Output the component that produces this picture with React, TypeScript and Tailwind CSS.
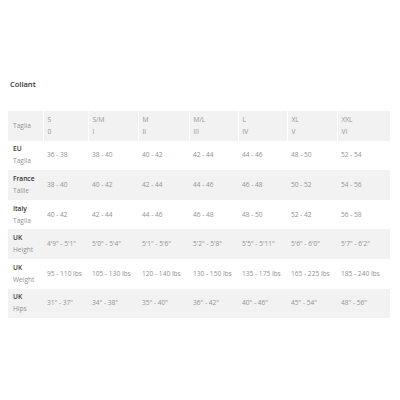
import React from "react";

const cols = [
  { w: 35, a: "Taglia", b: "" },
  { w: 45, a: "S", b: "0" },
  { w: 50, a: "S/M", b: "I" },
  { w: 51, a: "M", b: "II" },
  { w: 49, a: "M/L", b: "III" },
  { w: 49, a: "L", b: "IV" },
  { w: 50, a: "XL", b: "V" },
  { w: 53, a: "XXL", b: "VI" },
];

const rows: { a: string; b: string; v: string[] }[] = [
  { a: "EU", b: "Taglia", v: ["36 - 38", "38 - 40", "40 - 42", "42 - 44", "44 - 46", "48 - 50", "52 - 54"] },
  { a: "France", b: "Taille", v: ["38 - 40", "40 - 42", "42 - 44", "44 - 46", "46 - 48", "50 - 52", "54 - 56"] },
  { a: "Italy", b: "Taglia", v: ["40 - 42", "42 - 44", "44 - 46", "46 - 48", "48 - 50", "52 - 42", "56 - 58"] },
  { a: "UK", b: "Height", v: ["4'9\" - 5'1\"", "5'0\" - 5'4\"", "5'1\" - 5'6\"", "5'2\" - 5'8\"", "5'5\" - 5'11\"", "5'6\" - 6'0\"", "5'7\" - 6'2\""] },
  { a: "UK", b: "Weight", v: ["95 - 110 lbs", "105 - 130 lbs", "120 - 140 lbs", "130 - 150 lbs", "135 - 175 lbs", "165 - 225 lbs", "185 - 240 lbs"] },
  { a: "UK", b: "Hips", v: ["31\" - 37\"", "34\" - 38\"", "35\" - 40\"", "36\" - 42\"", "40\" - 46\"", "45\" - 54\"", "48\" - 56\""] },
];

export default function App() {
  return (
    <div className="w-[400px] h-[400px] bg-white pt-[78px] px-[8px]" style={{ fontFamily: '"Open Sans", sans-serif' }}>
      <div className="pl-[2px] text-[7.5px] leading-[12px] text-[#333333] font-semibold">Collant</div>
      <table className="mt-[21px] border-collapse table-fixed w-[382px]">
        <colgroup>
          {cols.map((c, i) => (
            <col key={i} style={{ width: c.w }} />
          ))}
        </colgroup>
        <thead>
          <tr className="bg-[#f2f2f2]">
            {cols.map((c, i) => (
              <th
                key={i}
                className={`text-left font-normal align-middle text-[6.6px] leading-[12px] text-[#929292] py-[2.8px] ${i === 0 ? "pl-[5px]" : "pl-[4px]"} ${i < cols.length - 1 ? "border-r border-white" : ""}`}
              >
                <div>{c.a}</div>
                {c.b && <div>{c.b}</div>}
              </th>
            ))}
          </tr>
        </thead>
        <tbody>
          {rows.map((r, ri) => (
            <tr key={ri} className={ri % 2 === 1 ? "bg-[#f2f2f2]" : "bg-white"}>
              <td className="align-middle text-[6.6px] leading-[12px] py-[2.8px] pl-[5px]">
                <div className="text-[#333333] font-semibold">{r.a}</div>
                <div className="text-[#929292]">{r.b}</div>
              </td>
              {r.v.map((v, vi) => (
                <td key={vi} className="align-middle text-[6.6px] leading-[12px] text-[#929292] pl-[4px] whitespace-nowrap">
                  {v}
                </td>
              ))}
            </tr>
          ))}
        </tbody>
      </table>
    </div>
  );
}
